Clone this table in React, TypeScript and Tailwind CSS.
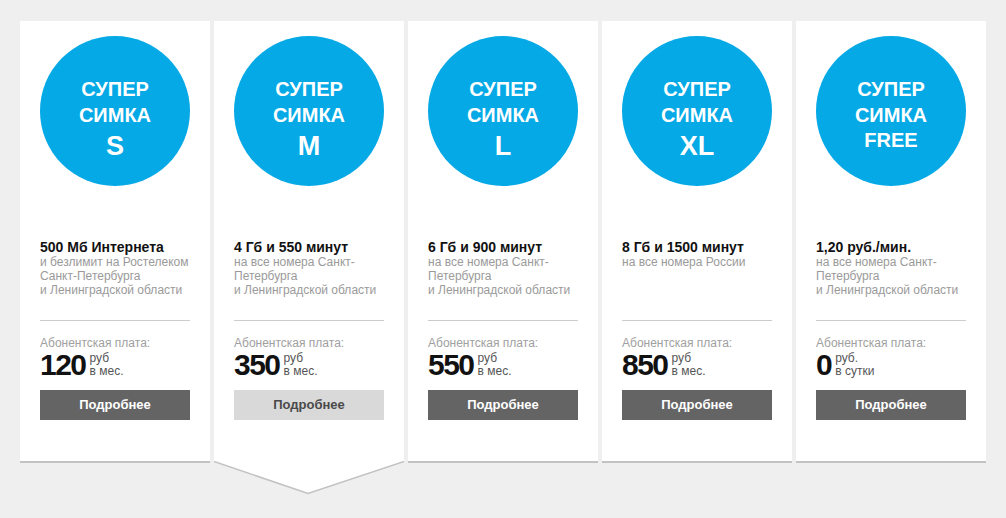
import React from 'react';

type Plan = {
  size: string;
  big: boolean;
  title: string;
  desc: string[];
  price: string;
  unit: string;
  period: string;
  active?: boolean;
};

const plans: Plan[] = [
  { size: 'S', big: true, title: '500 Мб Интернета', desc: ['и безлимит на Ростелеком', 'Санкт-Петербурга', 'и Ленинградской области'], price: '120', unit: 'руб', period: 'в мес.' },
  { size: 'M', big: true, title: '4 Гб и 550 минут', desc: ['на все номера Санкт-', 'Петербурга', 'и Ленинградской области'], price: '350', unit: 'руб', period: 'в мес.', active: true },
  { size: 'L', big: true, title: '6 Гб и 900 минут', desc: ['на все номера Санкт-', 'Петербурга', 'и Ленинградской области'], price: '550', unit: 'руб', period: 'в мес.' },
  { size: 'XL', big: true, title: '8 Гб и 1500 минут', desc: ['на все номера России'], price: '850', unit: 'руб', period: 'в мес.' },
  { size: 'FREE', big: false, title: '1,20 руб./мин.', desc: ['на все номера Санкт-', 'Петербурга', 'и Ленинградской области'], price: '0', unit: 'руб.', period: 'в сутки' },
];

function PlanCard({ plan }: { plan: Plan }) {
  return (
    <div
      className={`relative w-[190px] shrink-0 bg-white px-[20px] pt-[15px] pb-[41px] ${
        plan.active ? '' : 'shadow-[0_2px_0_#c2c2c2]'
      }`}
    >
      <div className="w-[150px] h-[150px] rounded-full bg-[#05a9e6] flex flex-col items-center pt-[40px] text-white font-bold">
        <div className="text-[20px] leading-[26px]">СУПЕР</div>
        <div className="text-[20px] leading-[26px]">СИМКА</div>
        {plan.big ? (
          <div className="text-[27px] leading-[28px] mt-[4px]">{plan.size}</div>
        ) : (
          <div className="text-[20px] leading-[28px] -mt-[2px]">{plan.size}</div>
        )}
      </div>

      <div className="mt-[53px] h-[81px]">
        <div className="text-[14px] leading-[16px] font-bold text-[#111]">{plan.title}</div>
        {plan.desc.map((line) => (
          <div key={line} className="text-[12px] leading-[14px] text-[#9a9a9a]">
            {line}
          </div>
        ))}
      </div>

      <div className="h-px bg-[#cccccc]" />

      <div className="mt-[15px] text-[12px] leading-[14px] text-[#a0a0a0]">Абонентская плата:</div>
      <div className="flex items-start">
        <span className="text-[30px] leading-[30px] font-bold text-[#111] tracking-[-1.5px]">{plan.price}</span>
        <span className="ml-[4px] mt-[2px] flex flex-col text-[12px] leading-[13px] text-[#555]">
          <span>{plan.unit}</span>
          <span>{plan.period}</span>
        </span>
      </div>

      <button
        className={`mt-[10px] w-full h-[30px] text-[13px] font-bold ${
          plan.active ? 'bg-[#d9d9d9] text-[#4a4a4a]' : 'bg-[#646464] text-white'
        }`}
      >
        Подробнее
      </button>

      {plan.active && (
        <svg className="absolute left-0 top-full" width="190" height="34" viewBox="0 0 190 34">
          <polygon points="0,0 94,32 190,0" fill="#ffffff" />
          <polyline points="0,0.5 94,32.5 190,0.5" fill="none" stroke="#c2c2c2" strokeWidth="1.5" />
        </svg>
      )}
    </div>
  );
}

export default function App() {
  return (
    <div
      className="w-[1006px] h-[518px] bg-[#efefef] pt-[21px] pl-[20px] overflow-hidden"
      style={{ fontFamily: '"Liberation Sans", Arial, sans-serif' }}
    >
      <div className="flex gap-[4px]">
        {plans.map((p) => (
          <PlanCard key={p.size} plan={p} />
        ))}
      </div>
    </div>
  );
}
